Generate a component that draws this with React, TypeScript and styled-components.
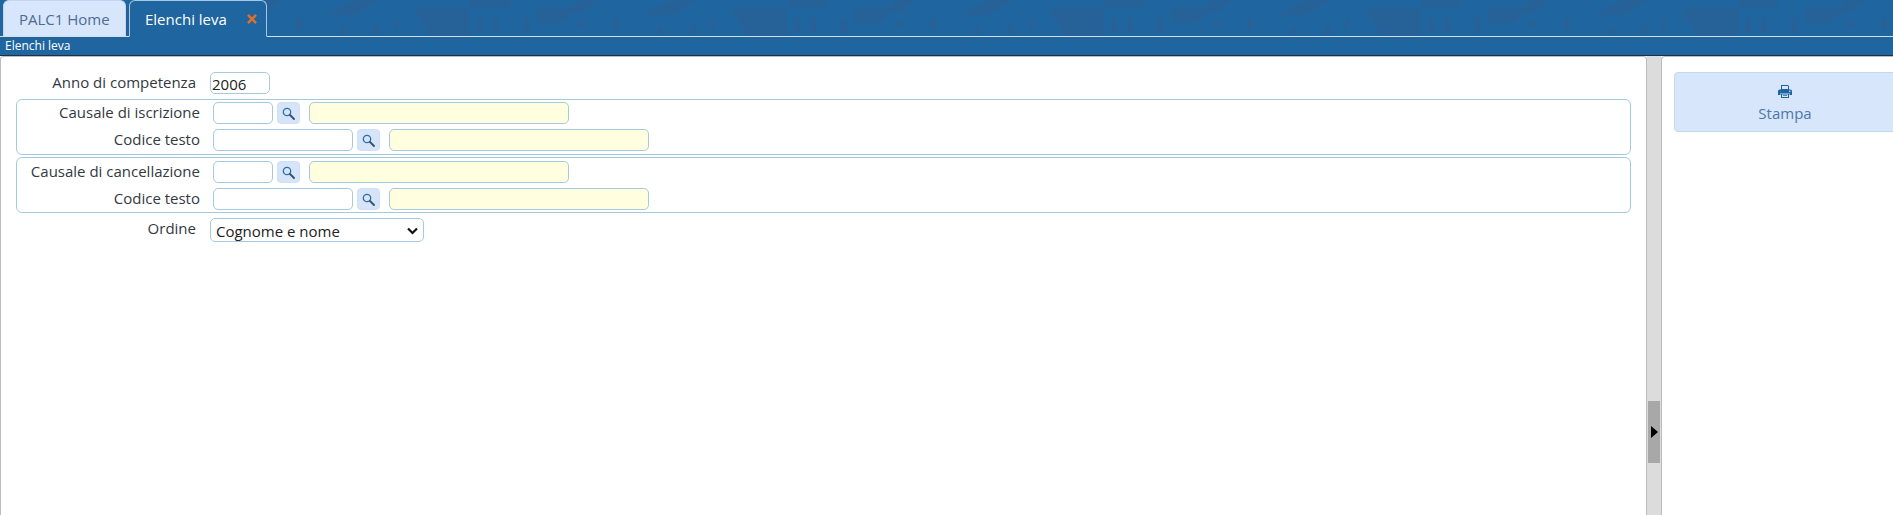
import React from "react";
import styled, { createGlobalStyle } from "styled-components";

const Global = createGlobalStyle`
  html, body { margin: 0; padding: 0; height: 100%; background: #fff; overflow: hidden; }
  #root { height: 100%; }
  * { box-sizing: border-box; }
  body { font-family: "Open Sans", "Liberation Sans", sans-serif; }
`;

const Page = styled.div`
  width: 1893px;
  height: 515px;
  display: flex;
  flex-direction: column;
  overflow: hidden;
`;

const TabBar = styled.div`
  height: 37px;
  flex: none;
  display: flex;
  gap: 3px;
  padding: 0 0 0 3px;
  border-bottom: 1px solid #d9dfe0;
  position: relative;
  background: #1f659f;
`;

const Texture = styled.svg`
  position: absolute;
  left: 0;
  top: 0;
  width: 100%;
  height: 36px;
`;

const Tab = styled.div<{ $active?: boolean }>`
  position: relative;
  width: ${(p) => (p.$active ? "138px" : "123px")};
  padding-left: 15px;
  display: flex;
  align-items: center;
  font-size: 15px;
  border-radius: 6px 6px 0 0;
  border: 1px solid ${(p) => (p.$active ? "#a6c9e2" : "#c5d6ee")};
  border-bottom: ${(p) => (p.$active ? "1px solid #1f659f" : "none")};
  height: ${(p) => (p.$active ? "37px" : "36px")};
  background: ${(p) => (p.$active ? "#1f659f" : "#d8e6fb")};
  color: ${(p) => (p.$active ? "#fff" : "#4c6c94")};
`;

const CloseIcon = styled.svg`
  margin-left: 20px;
  flex: none;
`;

const TitleBar = styled.div`
  height: 19px;
  flex: none;
  background: #1f659f;
  border-bottom: 1px solid #15334d;
  color: #fff;
  font-size: 12px;
  line-height: 17px;
  padding-left: 5px;
`;

const Body = styled.div`
  flex: 1;
  display: flex;
  min-height: 0;
`;

const Main = styled.div`
  width: 1647px;
  flex: none;
  background: #fff;
  border: 1px solid #bcbcbc;
  border-bottom: none;
  border-radius: 4px 4px 0 0;
  padding: 15px 15px 0 15px;
  display: flex;
  flex-direction: column;
`;

const Splitter = styled.div`
  width: 14px;
  flex: none;
  background: #dcdcdc;
  display: flex;
  align-items: flex-start;
  justify-content: center;
  padding-top: 345px;
`;

const Thumb = styled.div`
  width: 12px;
  height: 62px;
  background: #a8a8a8;
  display: flex;
  align-items: center;
  justify-content: center;
`;

const Arrow = styled.div`
  width: 0;
  height: 0;
  border-top: 6px solid transparent;
  border-bottom: 6px solid transparent;
  border-left: 7px solid #000;
`;

const Side = styled.div`
  flex: 1;
  background: #fff;
  border-left: 1px solid #bcbcbc;
  border-top: 1px solid #bcbcbc;
  border-radius: 4px 0 0 0;
  padding: 15px 0 0 12px;
  overflow: hidden;
`;

const PrintButton = styled.div`
  width: 260px;
  height: 60px;
  background: #d8e6fb;
  border: 1px solid #c3d9ef;
  border-radius: 4px;
  color: #4c78ab;
  font-size: 15px;
  display: flex;
  flex-direction: column;
  align-items: center;
  padding: 12px 38px 0 0;
  gap: 5px;
  line-height: 20px;
`;

const Row = styled.div<{ $mt?: number }>`
  display: flex;
  align-items: flex-start;
  margin-top: ${(p) => p.$mt ?? 0}px;
`;

const Label = styled.div<{ $w: number }>`
  width: ${(p) => p.$w}px;
  flex: none;
  text-align: right;
  font-size: 15px;
  color: #33393f;
  line-height: 20px;
`;

const Group = styled.div<{ $mt: number; $pt: number }>`
  height: 56px;
  margin-top: ${(p) => p.$mt}px;
  border: 1px solid #a6c9e2;
  border-radius: 6px;
  padding: ${(p) => p.$pt}px 0 0 0;
  display: flex;
  flex-direction: column;
  gap: 5px;
`;

const Field = styled.div<{ $w: number; $ml: number; $yellow?: boolean }>`
  width: ${(p) => p.$w}px;
  height: 22px;
  margin-left: ${(p) => p.$ml}px;
  flex: none;
  border: 1px solid #a6c9e2;
  border-radius: 5px;
  background: ${(p) => (p.$yellow ? "#ffffdf" : "#fff")};
  font-size: 15px;
  line-height: 22px;
  color: #222;
  padding-left: 1px;
`;

const Lookup = styled.div`
  width: 23px;
  height: 22px;
  margin-left: 4px;
  flex: none;
  border-radius: 4px;
  background: #d5e4f9;
  border: 1px solid #cfe0f5;
  display: flex;
  align-items: center;
  justify-content: center;
`;

const SelectBox = styled.div`
  width: 214px;
  height: 24px;
  margin-left: 14px;
  flex: none;
  border: 1px solid #a6c9e2;
  border-radius: 5px;
  background: #fff;
  font-size: 15px;
  color: #222;
  display: flex;
  align-items: center;
  justify-content: space-between;
  padding: 1px 5px 0 5px;
`;

const SearchIcon = () => (
  <svg width="13" height="13" viewBox="0 0 13 13" fill="none">
    <circle cx="5" cy="5" r="3.7" stroke="#2f6da3" strokeWidth="1.3" />
    <path d="M8 8l4 4" stroke="#33506c" strokeWidth="1.8" strokeLinecap="round" />
  </svg>
);

const Chevron = () => (
  <svg width="11" height="8" viewBox="0 0 11 8" fill="none">
    <path d="M1 1.5l4.5 4.5L10 1.5" stroke="#111" strokeWidth="2.2" />
  </svg>
);

const PrinterIcon = () => (
  <svg width="14" height="13" viewBox="0 0 14 13">
    <path d="M3 0h7l1 1v4H3z" fill="#1f659f" />
    <path d="M4 1h6v3H4z" fill="#d8e6fb" />
    <path d="M1.5 4.5h11A1.5 1.5 0 0 1 14 6v4h-2.5V8h-9v2H0V6a1.5 1.5 0 0 1 1.5-1.5z" fill="#1f659f" />
    <path d="M3 8.5h8V13H3z" fill="#1f659f" />
    <path d="M4 9.5h6V12H4z" fill="#d8e6fb" />
    <path d="M5 10.3h4v.6H5z" fill="#1f659f" />
    <circle cx="11.8" cy="6.3" r=".8" fill="#d8e6fb" />
  </svg>
);

const Pair = ({ label, w1 }: { label: string; w1: number }) => (
  <Row>
    <Label $w={183}>{label}</Label>
    <Field $w={w1} $ml={13} />
    <Lookup><SearchIcon /></Lookup>
    <Field $w={260} $ml={9} $yellow />
  </Row>
);

export default function App() {
  return (
    <Page>
      <Global />
      <TabBar>
        <Texture>
          <defs>
            <pattern id="tile" x="96" y="0" width="317" height="36" patternUnits="userSpaceOnUse">
              <g fill="#2a6093" opacity="0.6">
                <path d="M0 8H57V36H17z" />
                <path d="M57 0H97V7H57z" />
                <path d="M124 8H165L150 23H124z" />
                <path d="M165 0H185L170 13H155z" />
                <path d="M230 15H260L284 0H257z" />
                <rect x="64" y="18" width="6" height="14" />
                <rect x="80" y="18" width="6" height="14" />
                <rect x="110" y="18" width="7" height="15" />
                <circle cx="169" cy="25" r="4" />
                <rect x="200" y="18" width="6" height="12" />
                <rect x="244" y="27" width="6" height="8" />
                <rect x="277" y="25" width="7" height="10" />
                <path d="M297 25L302 16V30H297z" />
              </g>
            </pattern>
          </defs>
          <rect width="100%" height="36" fill="url(#tile)" />
        </Texture>
        <Tab>PALC1 Home</Tab>
        <Tab $active>
          Elenchi leva
          <CloseIcon width="10" height="10" viewBox="0 0 10 10">
            <path d="M.9.9l8.2 8.2M9.1.9L.9 9.1" stroke="#e0702c" strokeWidth="2.4" />
          </CloseIcon>
        </Tab>
      </TabBar>
      <TitleBar>Elenchi leva</TitleBar>
      <Body>
        <Main>
          <Row>
            <Label $w={180}>Anno di competenza</Label>
            <Field $w={60} $ml={14}>2006</Field>
          </Row>
          <Group $mt={5} $pt={2}>
            <Pair label="Causale di iscrizione" w1={60} />
            <Pair label="Codice testo" w1={140} />
          </Group>
          <Group $mt={2} $pt={3}>
            <Pair label="Causale di cancellazione" w1={60} />
            <Pair label="Codice testo" w1={140} />
          </Group>
          <Row $mt={5}>
            <Label $w={180}>Ordine</Label>
            <SelectBox>Cognome e nome<Chevron /></SelectBox>
          </Row>
        </Main>
        <Splitter>
          <Thumb><Arrow /></Thumb>
        </Splitter>
        <Side>
          <PrintButton>
            <PrinterIcon />
            Stampa
          </PrintButton>
        </Side>
      </Body>
    </Page>
  );
}
